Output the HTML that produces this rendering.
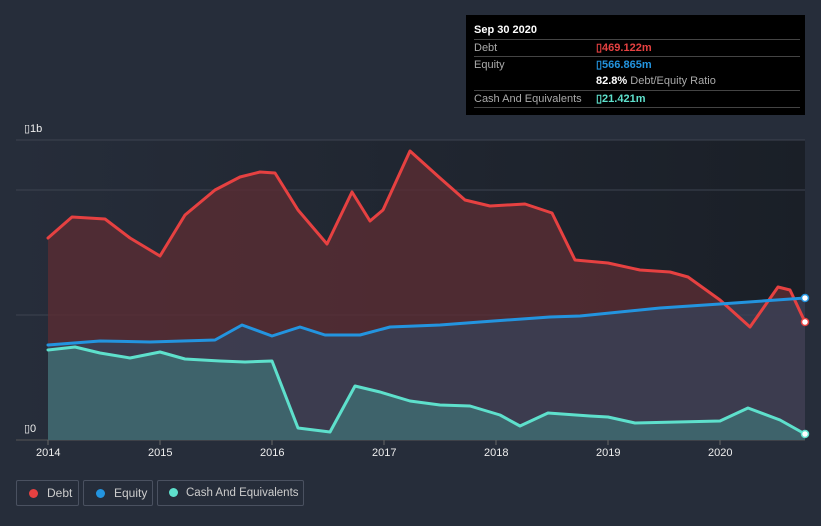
<!DOCTYPE html><html><head><style>
body{margin:0;width:821px;height:526px;background:#262d3a;font-family:"Liberation Sans",sans-serif;overflow:hidden;position:relative}
.tt{position:absolute;left:466px;top:15px;width:339px;height:100px;background:#000;color:#fff;font-size:11px}
.row{position:absolute;left:8px;width:326px;border-top:1px solid #444;height:17px;line-height:17px;color:#aaa}
.leg{position:absolute;top:480px;height:26px;border:1px solid #4a5160;border-radius:2px;color:#ccc;font-size:12px;line-height:24px;box-sizing:border-box;white-space:nowrap}
.dot{display:inline-block;width:9px;height:9px;border-radius:50%;margin:0 9px 0 12px;vertical-align:-1px}
.ax{position:absolute;color:#eee;font-size:11px}
</style></head><body>
<svg width="821" height="526" style="position:absolute;left:0;top:0">
<defs><linearGradient id="bg" x1="0" x2="1"><stop offset="0" stop-color="#262d3a"/><stop offset="1" stop-color="#1a1f27"/></linearGradient></defs>
<rect x="16" y="140" width="789" height="300" fill="url(#bg)"/>
<g stroke="#3d4350" stroke-width="1"><line x1="16" x2="805" y1="140" y2="140"/><line x1="16" x2="805" y1="190" y2="190"/><line x1="16" x2="805" y1="315" y2="315"/><line x1="16" x2="805" y1="440" y2="440" stroke="#555"/></g>
<path d="M48,238 72,217 105,219 130,238 160,256 185,215 215,190 240,177 260,172 275,173 298,210 327,244 352,192 370,221 383,210 410,151 440,178 465,200 490,206 525,204 552,213 575,260 608,263 640,270 670,272 688,277 720,300 750,327 778,287 790,290 805,322 805,440 48,440Z" fill="#5a2d33" fill-opacity="0.8"/>
<path d="M48,345 100,341 150,342 215,340 242,325 272,336 300,327 325,335 360,335 390,327 440,325 480,322 550,317 580,316 660,308 720,304 805,298 805,440 48,440Z" fill="#3a3f55" fill-opacity="0.85"/>
<path d="M48,350 75,347 100,353 130,358 160,352 185,359 220,361 245,362 272,361 298,428 330,432 355,386 380,392 410,401 440,405 470,406 500,415 520,426 548,413 590,416 608,417 635,423 720,421 748,408 780,420 805,434 805,440 48,440Z" fill="#3e6a70" fill-opacity="0.85"/>
<g fill="none" stroke-width="3" stroke-linejoin="round" stroke-linecap="round">
<path d="M48,238 72,217 105,219 130,238 160,256 185,215 215,190 240,177 260,172 275,173 298,210 327,244 352,192 370,221 383,210 410,151 440,178 465,200 490,206 525,204 552,213 575,260 608,263 640,270 670,272 688,277 720,300 750,327 778,287 790,290 805,322" stroke="#e64141"/>
<path d="M48,345 100,341 150,342 215,340 242,325 272,336 300,327 325,335 360,335 390,327 440,325 480,322 550,317 580,316 660,308 720,304 805,298" stroke="#2394df"/>
<path d="M48,350 75,347 100,353 130,358 160,352 185,359 220,361 245,362 272,361 298,428 330,432 355,386 380,392 410,401 440,405 470,406 500,415 520,426 548,413 590,416 608,417 635,423 720,421 748,408 780,420 805,434" stroke="#5ee0cc"/>
</g>
<circle cx="805" cy="322" r="3.5" fill="#fff" stroke="#e64141" stroke-width="1.5"/>
<circle cx="805" cy="298" r="3.5" fill="#fff" stroke="#2394df" stroke-width="1.5"/>
<circle cx="805" cy="434" r="3.5" fill="#fff" stroke="#5ee0cc" stroke-width="1.5"/>
<g stroke="#666"><line x1="48" x2="48" y1="440" y2="445"/><line x1="160" x2="160" y1="440" y2="445"/><line x1="272" x2="272" y1="440" y2="445"/><line x1="384" x2="384" y1="440" y2="445"/><line x1="496" x2="496" y1="440" y2="445"/><line x1="608" x2="608" y1="440" y2="445"/><line x1="720" x2="720" y1="440" y2="445"/></g>
</svg>
<div class="ax" style="left:24px;top:122px">▯1b</div>
<div class="ax" style="left:24px;top:422px">▯0</div>
<div class="ax" style="left:36px;top:447px">2014</div><div class="ax" style="left:148px;top:447px">2015</div><div class="ax" style="left:260px;top:447px">2016</div><div class="ax" style="left:372px;top:447px">2017</div><div class="ax" style="left:484px;top:447px">2018</div><div class="ax" style="left:596px;top:447px">2019</div><div class="ax" style="left:708px;top:447px">2020</div>
<div class="tt">
<div style="position:absolute;left:8px;top:9px;font-weight:bold">Sep 30 2020</div>
<div class="row" style="top:24px">Debt<span style="position:absolute;left:122px;color:#e64141;font-weight:bold">▯469.122m</span></div>
<div class="row" style="top:41px">Equity<span style="position:absolute;left:122px;color:#2394df;font-weight:bold">▯566.865m</span></div>
<div class="row" style="top:58px;border:none"><span style="position:absolute;left:122px"><b style="color:#fff">82.8%</b> Debt/Equity Ratio</span></div>
<div class="row" style="top:75px">Cash And Equivalents<span style="position:absolute;left:122px;color:#5ee0cc;font-weight:bold">▯21.421m</span></div>
<div class="row" style="top:92px;height:0"></div>
</div>
<div class="leg" style="left:16px;width:63px"><span class="dot" style="background:#e64141"></span>Debt</div>
<div class="leg" style="left:83px;width:70px"><span class="dot" style="background:#2394df"></span>Equity</div>
<div class="leg" style="left:157px;width:147px;font-size:11.5px"><span class="dot" style="background:#5ee0cc;margin:0 8px 0 11px"></span>Cash And Equivalents</div>
</body></html>
